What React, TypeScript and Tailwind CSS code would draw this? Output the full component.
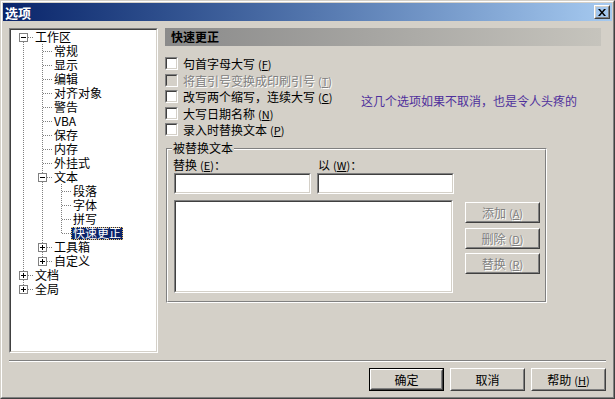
import type { ReactNode } from "react";

type TreeNode = { label: string; level: number; exp?: "plus" | "minus"; selected?: boolean };

const nodes: TreeNode[] = [
  { label: "工作区", level: 0, exp: "minus" },
  { label: "常规", level: 1 },
  { label: "显示", level: 1 },
  { label: "编辑", level: 1 },
  { label: "对齐对象", level: 1 },
  { label: "警告", level: 1 },
  { label: "VBA", level: 1 },
  { label: "保存", level: 1 },
  { label: "内存", level: 1 },
  { label: "外挂式", level: 1 },
  { label: "文本", level: 1, exp: "minus" },
  { label: "段落", level: 2 },
  { label: "字体", level: 2 },
  { label: "拼写", level: 2 },
  { label: "快速更正", level: 2, selected: true },
  { label: "工具箱", level: 1, exp: "plus" },
  { label: "自定义", level: 1, exp: "plus" },
  { label: "文档", level: 0, exp: "plus" },
  { label: "全局", level: 0, exp: "plus" },
];

// is there another node at `level` further down, before the branch closes
function continuesBelow(i: number, level: number) {
  for (let j = i + 1; j < nodes.length; j++) {
    if (nodes[j].level < level) return false;
    if (nodes[j].level === level) return true;
  }
  return false;
}

function Guide({ top, bottom, horiz, exp }: { top?: boolean; bottom?: boolean; horiz?: boolean; exp?: "plus" | "minus" }) {
  return (
    <svg width="19" height="14" className="block shrink-0">
      {top && bottom ? (
        <line x1="9.5" y1="0" x2="9.5" y2="14" stroke="#808080" strokeDasharray="1 1" />
      ) : top ? (
        <line x1="9.5" y1="0" x2="9.5" y2="7" stroke="#808080" strokeDasharray="1 1" />
      ) : bottom ? (
        <line x1="9.5" y1="8" x2="9.5" y2="14" stroke="#808080" strokeDasharray="1 1" />
      ) : null}
      {horiz ? <line x1="10" y1="7.5" x2="19" y2="7.5" stroke="#808080" strokeDasharray="1 1" /> : null}
      {exp ? (
        <g>
          <rect x="5.5" y="3.5" width="8" height="8" fill="#ffffff" stroke="#808080" />
          <line x1="7" y1="7.5" x2="12" y2="7.5" stroke="#000000" />
          {exp === "plus" ? <line x1="9.5" y1="5" x2="9.5" y2="10" stroke="#000000" /> : null}
        </g>
      ) : null}
    </svg>
  );
}

function Sunken({ className = "", bg = "bg-white", children }: { className?: string; bg?: string; children?: ReactNode }) {
  return (
    <div className={`border border-t-[#808080] border-l-[#808080] border-b-white border-r-white ${className}`}>
      <div className={`h-full border border-t-[#404040] border-l-[#404040] border-b-[#d4d0c8] border-r-[#d4d0c8] ${bg}`}>
        {children}
      </div>
    </div>
  );
}

function Raised({ className = "", children }: { className?: string; children?: ReactNode }) {
  return (
    <div className={`border border-t-white border-l-white border-b-[#404040] border-r-[#404040] ${className}`}>
      <div className="flex h-full items-center justify-center border border-t-[#d4d0c8] border-l-[#d4d0c8] border-b-[#808080] border-r-[#808080]">
        {children}
      </div>
    </div>
  );
}

function Key({ k }: { k: string }) {
  return (
    <span className="ml-[3px] text-[11px]">
      (<span className="underline underline-offset-1">{k}</span>)
    </span>
  );
}

const dimText = "text-[#808080] [text-shadow:1px_1px_0_#ffffff]";

function Check({ label, k, disabled, h }: { label: string; k: string; disabled?: boolean; h: string }) {
  return (
    <div className={`flex items-start ${h}`}>
      <Sunken className="h-[13px] w-[13px] shrink-0" bg={disabled ? "bg-[#d4d0c8]" : "bg-white"} />
      <span className={`ml-[5px] whitespace-nowrap text-[12px] leading-[13px] ${disabled ? dimText : ""}`}>
        {label}
        <Key k={k} />
      </span>
    </div>
  );
}

function SideButton({ label, k, className = "" }: { label: string; k: string; className?: string }) {
  return (
    <Raised className={`h-[21px] w-[75px] ${className}`}>
      <span className={`text-[12px] leading-[12px] ${dimText}`}>
        {label}
        <Key k={k} />
      </span>
    </Raised>
  );
}

function Tree() {
  return (
    <Sunken className="h-[325px] w-[149px] shrink-0">
      <div className="pl-[3px]">
        {nodes.map((node, i) => {
          const cells = [];
          for (let k = 0; k < node.level; k++) {
            cells.push(<Guide key={k} top={continuesBelow(i, k)} bottom={continuesBelow(i, k)} />);
          }
          return (
            <div key={node.label} className="flex h-[14px] items-center">
              {cells}
              <Guide top={i !== 0} bottom={continuesBelow(i, node.level)} horiz exp={node.exp} />
              <span
                className={`flex h-[13px] items-center whitespace-nowrap border px-px text-[12px] leading-[12px] ${
                  node.selected ? "border-dotted border-[#f2c566] bg-[#0a246a] text-white" : "border-transparent text-black"
                }`}
              >
                {node.label}
              </span>
            </div>
          );
        })}
      </div>
    </Sunken>
  );
}

export default function App() {
  return (
    <div className="h-[399px] w-[615px] border border-t-[#d4d0c8] border-l-[#d4d0c8] border-b-[#404040] border-r-[#404040] bg-[#d4d0c8] text-black [font-family:'Noto_Sans_CJK_SC','Liberation_Sans',sans-serif]">
      <div className="flex h-full flex-col border border-t-white border-l-white border-b-[#808080] border-r-[#808080] p-px">
        {/* title bar */}
        <div className="flex h-[18px] shrink-0 items-center justify-between bg-linear-to-r from-[#0a246a] to-[#a6caf0] pl-[2px] pr-[2px]">
          <span className="text-[13px] font-bold leading-[13px] text-white">选项</span>
          <Raised className="h-[14px] w-[16px]">
            <svg width="8" height="7" viewBox="0 0 8 7">
              <path d="M0 0h2l2 2.4L6 0h2L5 3.5 8 7H6L4 4.6 2 7H0l3-3.5z" fill="#000000" />
            </svg>
          </Raised>
        </div>

        <div className="flex flex-1 flex-col px-[6px] pt-[7px]">
          <div className="flex h-[325px] gap-[7px]">
            <Tree />

            <div className="flex w-[436px] flex-col">
              <div className="flex h-[18px] items-center bg-linear-to-r from-[#8a8a8a] to-[#c6c4bd] pl-[6px]">
                <span className="text-[12px] font-bold leading-[12px]">快速更正</span>
              </div>

              <div className="mt-[11px] flex">
                <div className="w-[196px]">
                  <Check label="句首字母大写" k="F" h="h-[17px]" />
                  <Check label="将直引号变换成印刷引号" k="T" disabled h="h-[16px]" />
                  <Check label="改写两个缩写，连续大写" k="C" h="h-[17px]" />
                  <Check label="大写日期名称" k="N" h="h-[16px]" />
                  <Check label="录入时替换文本" k="P" h="h-[13px]" />
                </div>
                <div className="pt-[37px] text-[12px] leading-[13px] whitespace-nowrap text-[#4e2f9c]">
                  这几个选项如果不取消，也是令人头疼的
                </div>
              </div>

              {/* group box */}
              <div className="relative ml-px mt-[12px] h-[155px] w-[381px] border border-t-[#808080] border-l-[#808080] border-b-white border-r-white">
                <span className="absolute left-[5px] top-[-7px] bg-[#d4d0c8] px-[1px] text-[12px] leading-[12px]">被替换文本</span>
                <div className="h-full border border-t-white border-l-white border-b-[#808080] border-r-[#808080] pl-[6px] pt-[9px]">
                  <div className="-ml-px flex text-[12px] leading-[12px]">
                    <span className="w-[145px]">
                      替换
                      <Key k="E" />：
                    </span>
                    <span>
                      以<Key k="W" />：
                    </span>
                  </div>
                  <div className="mt-[2px] flex gap-[6px]">
                    <Sunken className="h-[21px] w-[137px]" />
                    <Sunken className="h-[21px] w-[137px]" />
                  </div>
                  <div className="mt-[6px] flex">
                    <Sunken className="h-[93px] w-[279px]" />
                    <div className="ml-[12px] mt-[2px] flex flex-col">
                      <SideButton label="添加" k="A" />
                      <SideButton label="删除" k="D" className="mt-[5px]" />
                      <SideButton label="替换" k="R" className="mt-[4px]" />
                    </div>
                  </div>
                </div>
              </div>
            </div>
          </div>

          <div className="mt-[7px] h-[2px] border-t border-b border-t-[#808080] border-b-white" />

          <div className="mt-[6px] flex justify-end gap-[6px]">
            <div className="h-[23px] w-[75px] border border-black">
              <Raised className="h-full w-full">
                <span className="text-[12px] leading-[12px]">确定</span>
              </Raised>
            </div>
            <Raised className="h-[23px] w-[75px]">
              <span className="text-[12px] leading-[12px]">取消</span>
            </Raised>
            <Raised className="h-[23px] w-[75px]">
              <span className="text-[12px] leading-[12px]">
                帮助
                <Key k="H" />
              </span>
            </Raised>
          </div>
        </div>
      </div>
    </div>
  );
}
